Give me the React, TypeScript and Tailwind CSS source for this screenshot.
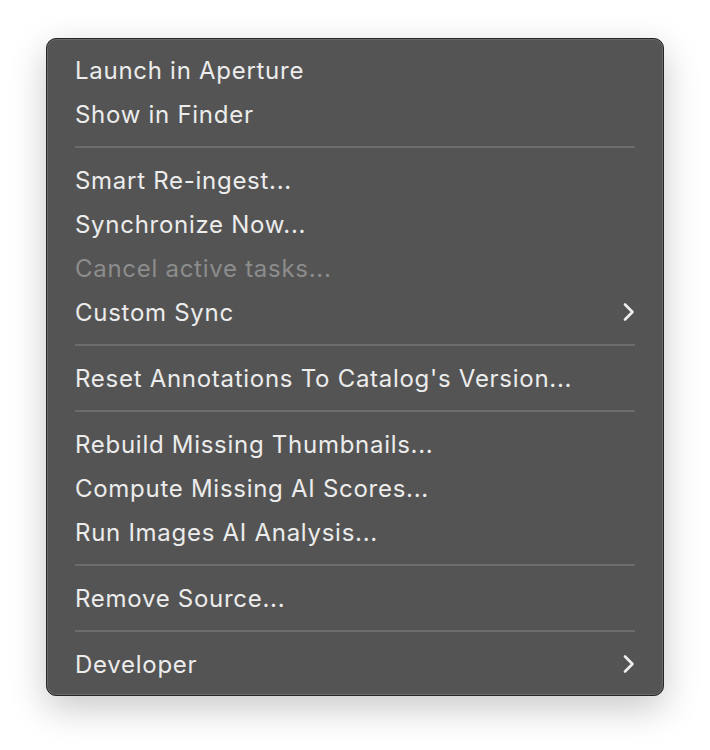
import React from "react";

type Item = { label: string; disabled?: boolean; submenu?: boolean } | "sep";

const items: Item[] = [
  { label: "Launch in Aperture" },
  { label: "Show in Finder" },
  "sep",
  { label: "Smart Re-ingest..." },
  { label: "Synchronize Now..." },
  { label: "Cancel active tasks...", disabled: true },
  { label: "Custom Sync", submenu: true },
  "sep",
  { label: "Reset Annotations To Catalog's Version..." },
  "sep",
  { label: "Rebuild Missing Thumbnails..." },
  { label: "Compute Missing AI Scores..." },
  { label: "Run Images AI Analysis..." },
  "sep",
  { label: "Remove Source..." },
  "sep",
  { label: "Developer", submenu: true },
];

function Chevron() {
  return (
    <svg width="14" height="20" viewBox="0 0 14 20" fill="none">
      <path d="M3 2.5 L10.5 10 L3 17.5" stroke="#eeeeee" strokeWidth="2.6" strokeLinecap="round" strokeLinejoin="round" />
    </svg>
  );
}

export default function App() {
  return (
    <div className="w-[710px] h-[750px] bg-white" style={{ fontFamily: "Inter, 'Noto Sans', sans-serif" }}>
      <div className="pt-[38px] pl-[46px]">
        <div className="w-[618px] h-[658px] rounded-[10px] bg-[#545454] border border-[#262626] shadow-[0_12px_36px_rgba(0,0,0,0.22)] ring-1 ring-inset ring-[#6a6a6a] pt-[9px] px-[28px]">
          {items.map((it, i) =>
            it === "sep" ? (
              <div key={i} className="h-[22px] flex items-center">
                <div className="h-[2px] w-full bg-[#6c6c6c]" />
              </div>
            ) : (
              <div
                key={i}
                className={`h-[44px] flex items-center justify-between text-[24px] tracking-[0.72px] ${
                  it.disabled ? "text-[#8c8c8c]" : "text-[#ececec]"
                }`}
              >
                <span className="pt-[1px]">{it.label}</span>
                {it.submenu && (
                  <span className="mr-[-1px]">
                    <Chevron />
                  </span>
                )}
              </div>
            )
          )}
        </div>
      </div>
    </div>
  );
}
